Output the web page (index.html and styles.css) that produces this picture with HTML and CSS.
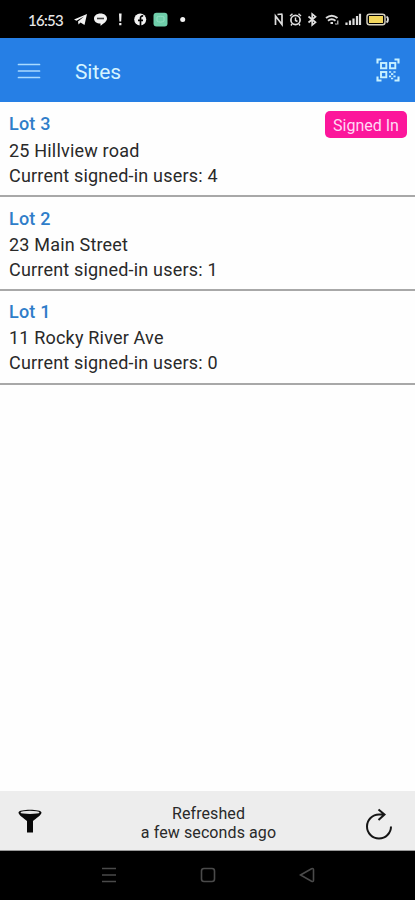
FILE: index.html
```html
<!DOCTYPE html>
<html lang="en">
<head>
<meta charset="utf-8">
<meta name="viewport" content="width=device-width, initial-scale=1">
<title>Sites</title>
<link rel="stylesheet" href="styles.css">
</head>
<body>
<div class="screen">
  <div class="status">
    <span class="clock">16:53</span>
    <svg class="status-left" viewBox="72 8 118 24" width="118" height="24" fill="#f2f2f2">
      <path d="M74 19.5 87 14 84.5 25 80.5 22.5 78.5 24.5 78 21.5 84 16.5 76.5 20.8Z"/>
      <path d="M100.5 13.5c3.800 0 6.500 2.200 6.500 5 0 3-3.500 5-6.500 7.200v-2.100c-3.800 0-6.500-2.200-6.500-5.100 0-2.800 2.700-5 6.500-5z"/>
      <path d="M97 18.500h7" stroke="#444" stroke-width="1.600"/>
      <path d="M119 13.500h2.600l-.4 8h-1.800zM119.200 23h2.200v2.300h-2.200z"/>
      <circle cx="140.200" cy="19.500" r="6"/>
      <path d="M140.500 26v-8c0-1.500 1-2.200 2.700-2M138 20.300h5" fill="none" stroke="#000" stroke-width="1.700"/>
      <rect x="153.500" y="12.700" width="14" height="13.800" rx="3" fill="#6fceaa"/>
      <path d="M157 17c2-1 5-1 7 0v4c-2 1.500-5 1.500-7 0z" fill="none" stroke="#91dfc2" stroke-width="1"/>
      <circle cx="182.700" cy="19.500" r="2.500"/>
    </svg>
    <svg class="status-right" viewBox="270 8 124 24" width="124" height="24" fill="none" stroke="#dedede" stroke-width="1.400">
      <path d="M275.500 25v-9l6.500 8.500V14.500M277.500 14.500l5-.5" stroke-width="1.700"/>
      <circle cx="295.500" cy="20" r="4.600" stroke-width="1.700"/><path d="M295.500 17.500v3l2 1M290 16l2.500-2.300M301 16l-2.500-2.300M292 24l-1 1.500M299 24l1 1.500"/>
      <path d="m308.500 16.500 7 5.800-3.300 2.700V14l3.300 2.700-7 5.800" stroke-width="1.700"/>
      <path d="M326 18c3.500-2.800 8-2.800 11.500 0M328 20.700c2.300-1.800 5.200-1.800 7.500 0M330.500 23h2.500" stroke-width="1.900"/><path d="M337.800 20.500v4M335.500 23.500l1 1" stroke-width="1.100"/>
      <path d="M346.500 25v-2.500M350 25v-4.500M353.500 25v-6.500M357 25v-9M360 25V13.700" stroke-width="2.200"/>
      <rect x="367" y="14.200" width="18" height="10.500" rx="2.500" stroke="#d8d3c3"/>
      <rect x="369" y="16" width="14" height="7" fill="#f3d75c" stroke="none"/>
      <path d="M386.500 16.500c2 1.200 2 4.800 0 6" stroke-width="1.900"/>
    </svg>
  </div>
  <header class="bar">
    <svg class="menu" viewBox="0 0 24 18" width="24" height="18" stroke="#a9daff" stroke-width="1.700" stroke-linecap="round"><path d="M1.500 2.500h21M1.500 9h21M1.500 15.500h21"/></svg>
    <h1 class="title">Sites</h1>
    <svg class="qr" viewBox="0 0 24 24" width="24" height="24" fill="none" stroke="#c8f1ff" stroke-width="1.900">
      <path d="M1.500 5.500v-4h4M18.500 1.500h4v4M22.500 18.500v4h-4M5.500 22.500h-4v-4" stroke-width="2.100"/>
      <rect x="5" y="5" width="5.300" height="5.300"/><rect x="14" y="5" width="5.300" height="5.300"/><rect x="5" y="14" width="5.300" height="5.300"/>
      <path d="M13 14h2.200m2.200 0h2.200M15 16.200h2.300M13 18.400h2.200m2.200 0h2.200M15 20.500h2.200" stroke-width="1.700"/>
    </svg>
  </header>
  <main class="list">
    <article class="site">
      <div class="info"><h2>Lot 3</h2><p>25 Hillview road</p><p>Current signed-in users: 4</p></div>
      <span class="badge">Signed In</span>
    </article>
    <article class="site">
      <div class="info"><h2>Lot 2</h2><p>23 Main Street</p><p>Current signed-in users: 1</p></div>
    </article>
    <article class="site">
      <div class="info"><h2>Lot 1</h2><p>11 Rocky River Ave</p><p>Current signed-in users: 0</p></div>
    </article>
  </main>
  <footer class="footer">
    <svg viewBox="0 0 24 24" width="24" height="24"><path d="M.5 3.500C.5-.2 23.500-.2 23.500 3.500c0 2.500-5.500 6-8.500 8.500v11.500H9V12C6 9.500.5 6 .5 3.500z" fill="#080808"/><ellipse cx="12" cy="3.400" rx="9.500" ry="1.700" fill="#e4e4e4"/></svg>
    <p class="refreshed">Refreshed<br>a few seconds ago</p>
    <svg class="reload" viewBox="0 0 28 32" width="28" height="32" fill="none" stroke="#151515" stroke-width="2"><path d="M26 18.500A12 12 0 1 1 14 6.500h5M13.500 1.500l6 5-6 5.500"/></svg>
  </footer>
  <nav class="nav">
    <svg viewBox="0 0 16 16" width="16" height="16"><path d="M1 1.500h14M1 8h14M1 14.500h14"/></svg>
    <svg viewBox="0 0 16 16" width="16" height="16"><rect x="1.500" y="1.500" width="13" height="13" rx="2.500"/></svg>
    <svg viewBox="0 0 16 16" width="16" height="16"><path d="M1.500 8 12.500 1.700q2-.7 2 1v10.600q0 1.700-2 1z"/></svg>
  </nav>
</div>
</body>
</html>
```
FILE: styles.css
```css
* { box-sizing: border-box; }
body, h1, h2, p { margin: 0; }
body { background: #fff; font-family: Roboto, "Liberation Sans", sans-serif; }
svg { display: block; flex: none; }
.screen { height: 900px; display: flex; flex-direction: column; background: #fefefe; }
.status { height: 38px; flex: none; background: #000; display: flex; align-items: center; padding: 1px 21px 0 28px; }
.clock { width: 44px; color: #e8e8e8; font: 500 15px/20px Lato, sans-serif; letter-spacing: -.75px; white-space: nowrap; }
.status-right { margin-left: auto; }
.bar { height: 64px; flex: none; background: #267fe5; display: flex; align-items: center; padding: 0 15px 0 17px; }
.title { margin-left: 34px; padding-top: 3px; font-size: 21px; line-height: 26px; font-weight: 400; letter-spacing: -.1px; color: #d5f4ff; }
.menu { margin-top: 1px; }
.qr { margin-left: auto; }
.list { flex: 1; }
.site { display: flex; justify-content: space-between; align-items: flex-start; padding: 8px 8px 0 9px; border-bottom: 2px solid #a8a8a8; height: 94px; }
.site:first-child { height: 95px; }
.site:first-child h2 { line-height: 28px; }
.site:last-child { padding-top: 7px; }
.info { font-size: 18px; line-height: 25px; letter-spacing: .19px; color: #292929; white-space: nowrap; }
.info h2 { font-size: 18px; line-height: 27px; font-weight: 500; color: #2f7dc9; }
.badge { margin-top: 1px; width: 82px; height: 27px; border-radius: 5px; background: #fc169b; color: #ffd9f5; font-size: 16px; line-height: 30px; text-align: center; }
.footer { height: 60px; flex: none; background: #ededed; border-bottom: 1px solid #999; display: flex; align-items: center; justify-content: space-between; padding: 0 22px 0 18px; }
.refreshed { position: relative; left: 5px; font-size: 16px; line-height: 19px; letter-spacing: .1px; color: #292929; text-align: center; padding-top: 4px; }
.reload { margin-top: 6px; }
.nav { height: 49px; flex: none; background: #000; display: flex; justify-content: center; gap: 83px; padding-top: 16px; }
.nav svg { fill: none; stroke: #4a4a4a; stroke-width: 1.600; }
```
